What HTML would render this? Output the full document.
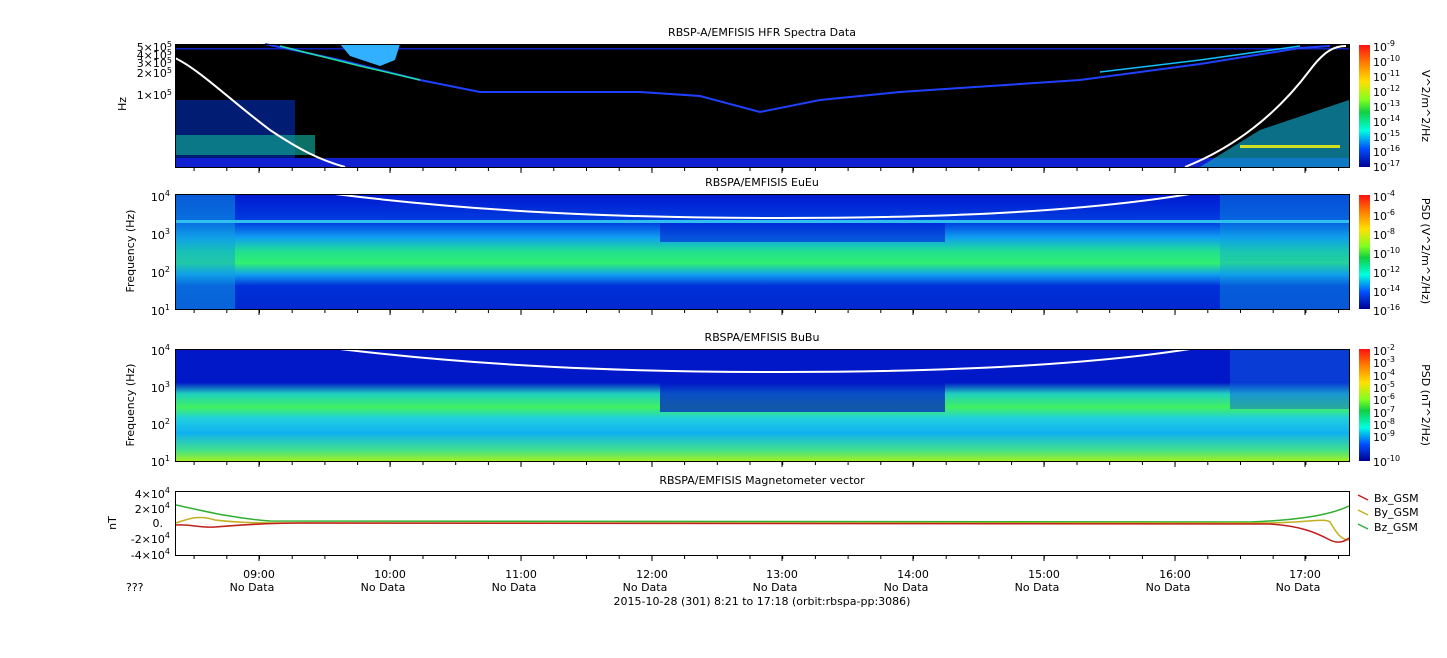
<!DOCTYPE html>
<html><head><meta charset="utf-8"><style>
html,body{margin:0;padding:0;background:#fff;width:1447px;height:658px;overflow:hidden}
svg{display:block;font-family:"DejaVu Sans","Liberation Sans",sans-serif}
text{fill:#000;font-size:11px}
</style></head><body>
<svg width="1447" height="658" viewBox="0 0 1447 658">
<defs>
<linearGradient id="jet" x1="0" y1="0" x2="0" y2="1">
<stop offset="0" stop-color="#ff1010"/><stop offset="0.15" stop-color="#ff8000"/><stop offset="0.3" stop-color="#ffe000"/><stop offset="0.45" stop-color="#80ff20"/><stop offset="0.55" stop-color="#10d040"/><stop offset="0.7" stop-color="#00ffe0"/><stop offset="0.85" stop-color="#0050ff"/><stop offset="1" stop-color="#000090"/>
</linearGradient>
<linearGradient id="p2" x1="0" y1="0" x2="0" y2="1">
<stop offset="0" stop-color="#0018d0"/><stop offset="0.25" stop-color="#0040e0"/><stop offset="0.38" stop-color="#10a0f0"/><stop offset="0.5" stop-color="#20e090"/><stop offset="0.6" stop-color="#30f070"/><stop offset="0.7" stop-color="#10a0f0"/><stop offset="0.8" stop-color="#0030d8"/><stop offset="1" stop-color="#0028d0"/>
</linearGradient>
<linearGradient id="p3" x1="0" y1="0" x2="0" y2="1">
<stop offset="0" stop-color="#0018c8"/><stop offset="0.3" stop-color="#0018c8"/><stop offset="0.4" stop-color="#20d0c0"/><stop offset="0.52" stop-color="#40f060"/><stop offset="0.62" stop-color="#20d0e0"/><stop offset="0.75" stop-color="#10b0f0"/><stop offset="0.9" stop-color="#40e090"/><stop offset="1" stop-color="#a0f020"/>
</linearGradient>
<pattern id="mt" x="193.6" y="0" width="32.7" height="700" patternUnits="userSpaceOnUse"><rect x="0" y="0" width="1" height="700" fill="#000"/></pattern>
</defs>

<!-- Panel 1 -->
<text x="762" y="36" text-anchor="middle">RBSP-A/EMFISIS  HFR Spectra Data</text>
<rect x="175" y="44" width="1174" height="123" fill="#000"/>
<rect x="175" y="48" width="1174" height="1.5" fill="#1020c0"/>
<path d="M265 44 L340 60 L420 80 L480 92 L640 92 L700 96 L760 112 L820 100 L900 92 L960 88 L1080 80 L1200 64 L1300 48 L1330 46" stroke="#2040ff" stroke-width="2" fill="none"/>
<path d="M280 46 L360 66 L420 80" stroke="#20e0a0" stroke-width="1.5" fill="none"/>
<path d="M1100 72 L1200 60 L1300 46" stroke="#10c0ff" stroke-width="1.5" fill="none"/>
<path d="M340 44 L400 44 L395 60 L380 66 L350 56Z" fill="#30b0ff"/>
<rect x="175" y="100" width="120" height="67" fill="#0030c0" opacity="0.6"/>
<rect x="175" y="135" width="140" height="20" fill="#10a090" opacity="0.7"/>
<rect x="175" y="158" width="1174" height="9" fill="#1020d0"/>
<path d="M1200 167 L1260 130 L1349 100 L1349 167Z" fill="#10a0c0" opacity="0.7"/>
<rect x="1240" y="145" width="100" height="3" fill="#d0e020"/>
<path d="M175 58 C200 70 230 100 270 130 C300 150 320 160 345 167" stroke="#fff" stroke-width="2" fill="none"/>
<path d="M1185 167 C1240 145 1280 110 1310 70 C1325 50 1335 46 1346 46" stroke="#fff" stroke-width="2" fill="none"/>
<rect x="175.5" y="44.5" width="1174" height="123" fill="none" stroke="#000"/>
<text x="120" y="110" transform="rotate(-90 120 104)" text-anchor="middle">Hz</text>
<g font-size="10" text-anchor="end"><text x="172" y="51">5×10<tspan dy="-4" font-size="8">5</tspan></text><text x="172" y="59">4×10<tspan dy="-4" font-size="8">5</tspan></text><text x="172" y="67">3×10<tspan dy="-4" font-size="8">5</tspan></text><text x="172" y="77">2×10<tspan dy="-4" font-size="8">5</tspan></text><text x="172" y="99">1×10<tspan dy="-4" font-size="8">5</tspan></text></g>
<rect x="1359" y="45" width="11" height="122" fill="url(#jet)"/>
<g font-size="11"><text x="1373" y="51">10<tspan dy="-5" font-size="8">-9</tspan></text><text x="1373" y="66">10<tspan dy="-5" font-size="8">-10</tspan></text><text x="1373" y="81">10<tspan dy="-5" font-size="8">-11</tspan></text><text x="1373" y="96">10<tspan dy="-5" font-size="8">-12</tspan></text><text x="1373" y="111">10<tspan dy="-5" font-size="8">-13</tspan></text><text x="1373" y="126">10<tspan dy="-5" font-size="8">-14</tspan></text><text x="1373" y="141">10<tspan dy="-5" font-size="8">-15</tspan></text><text x="1373" y="156">10<tspan dy="-5" font-size="8">-16</tspan></text><text x="1373" y="171">10<tspan dy="-5" font-size="8">-17</tspan></text></g>
<text x="1422" y="106" transform="rotate(90 1422 106)" text-anchor="middle">V^2/m^2/Hz</text>

<!-- Panel 2 -->
<text x="762" y="186" text-anchor="middle">RBSPA/EMFISIS  EuEu</text>
<rect x="175" y="194" width="1174" height="115" fill="url(#p2)"/>
<rect x="175" y="194" width="60" height="115" fill="#10a0e0" opacity="0.5"/>
<rect x="1220" y="194" width="129" height="115" fill="#10a0e0" opacity="0.4"/>
<rect x="660" y="222" width="285" height="20" fill="#0020d0" opacity="0.6"/>
<rect x="175" y="220" width="1174" height="3" fill="#30c0f0"/>
<path d="M335 194 C480 212 620 218 780 218 C940 218 1080 212 1190 194" stroke="#fff" stroke-width="2" fill="none"/>
<rect x="175.5" y="194.5" width="1174" height="115" fill="none" stroke="#000"/>
<text x="134" y="251" transform="rotate(-90 134 251)" text-anchor="middle">Frequency (Hz)</text>
<g text-anchor="end"><text x="170" y="201">10<tspan dy="-5" font-size="8">4</tspan></text><text x="170" y="239">10<tspan dy="-5" font-size="8">3</tspan></text><text x="170" y="277">10<tspan dy="-5" font-size="8">2</tspan></text><text x="170" y="315">10<tspan dy="-5" font-size="8">1</tspan></text></g>
<rect x="1359" y="195" width="11" height="114" fill="url(#jet)"/>
<g><text x="1373" y="201">10<tspan dy="-5" font-size="8">-4</tspan></text><text x="1373" y="220">10<tspan dy="-5" font-size="8">-6</tspan></text><text x="1373" y="239">10<tspan dy="-5" font-size="8">-8</tspan></text><text x="1373" y="258">10<tspan dy="-5" font-size="8">-10</tspan></text><text x="1373" y="277">10<tspan dy="-5" font-size="8">-12</tspan></text><text x="1373" y="296">10<tspan dy="-5" font-size="8">-14</tspan></text><text x="1373" y="315">10<tspan dy="-5" font-size="8">-16</tspan></text></g>
<text x="1422" y="251" transform="rotate(90 1422 251)" text-anchor="middle">PSD (V^2/m^2/Hz)</text>

<!-- Panel 3 -->
<text x="762" y="341" text-anchor="middle">RBSPA/EMFISIS  BuBu</text>
<rect x="175" y="349" width="1174" height="112" fill="url(#p3)"/>
<rect x="660" y="380" width="285" height="32" fill="#0018c8" opacity="0.7"/>
<rect x="1230" y="349" width="119" height="60" fill="#1060e0" opacity="0.5"/>
<path d="M340 349 C480 366 620 372 780 372 C940 372 1080 366 1190 349" stroke="#fff" stroke-width="2" fill="none"/>
<rect x="175.5" y="349.5" width="1174" height="112" fill="none" stroke="#000"/>
<text x="134" y="405" transform="rotate(-90 134 405)" text-anchor="middle">Frequency (Hz)</text>
<g text-anchor="end"><text x="170" y="355">10<tspan dy="-5" font-size="8">4</tspan></text><text x="170" y="392">10<tspan dy="-5" font-size="8">3</tspan></text><text x="170" y="429">10<tspan dy="-5" font-size="8">2</tspan></text><text x="170" y="466">10<tspan dy="-5" font-size="8">1</tspan></text></g>
<rect x="1359" y="349" width="11" height="112" fill="url(#jet)"/>
<g><text x="1373" y="355">10<tspan dy="-5" font-size="8">-2</tspan></text><text x="1373" y="367">10<tspan dy="-5" font-size="8">-3</tspan></text><text x="1373" y="380">10<tspan dy="-5" font-size="8">-4</tspan></text><text x="1373" y="392">10<tspan dy="-5" font-size="8">-5</tspan></text><text x="1373" y="404">10<tspan dy="-5" font-size="8">-6</tspan></text><text x="1373" y="417">10<tspan dy="-5" font-size="8">-7</tspan></text><text x="1373" y="429">10<tspan dy="-5" font-size="8">-8</tspan></text><text x="1373" y="441">10<tspan dy="-5" font-size="8">-9</tspan></text><text x="1373" y="466">10<tspan dy="-5" font-size="8">-10</tspan></text></g>
<text x="1422" y="405" transform="rotate(90 1422 405)" text-anchor="middle">PSD (nT^2/Hz)</text>

<!-- Panel 4 -->
<text x="762" y="484" text-anchor="middle">RBSPA/EMFISIS  Magnetometer vector</text>
<rect x="175.5" y="491.5" width="1174" height="64" fill="none" stroke="#000"/>
<path d="M176 505 C200 510 230 518 270 521 L1250 522 C1300 520 1330 515 1349 506" stroke="#30b030" stroke-width="1.5" fill="none"/>
<path d="M176 523 C190 518 200 515 215 520 C240 523 260 523 300 523 L1270 523 C1310 522 1325 518 1330 522 C1335 530 1340 540 1349 540" stroke="#c0b020" stroke-width="1.5" fill="none"/>
<path d="M176 525 C190 524 200 528 215 527 C240 525 270 523 300 523 L1270 524 C1300 526 1315 532 1330 540 C1338 544 1344 542 1349 538" stroke="#c02020" stroke-width="1.5" fill="none"/>
<text x="116" y="523" transform="rotate(-90 116 523)" text-anchor="middle">nT</text>
<g text-anchor="end"><text x="170" y="498">4×10<tspan dy="-5" font-size="8">4</tspan></text><text x="170" y="513">2×10<tspan dy="-5" font-size="8">4</tspan></text><text x="163" y="527">0.</text><text x="170" y="543">-2×10<tspan dy="-5" font-size="8">4</tspan></text><text x="170" y="559">-4×10<tspan dy="-5" font-size="8">4</tspan></text></g>
<g><path d="M1358 495 l10 5" stroke="#c02020" stroke-width="1.5"/><text x="1374" y="502">Bx_GSM</text>
<path d="M1358 510 l10 5" stroke="#c0b020" stroke-width="1.5"/><text x="1374" y="516">By_GSM</text>
<path d="M1358 524 l10 5" stroke="#30b030" stroke-width="1.5"/><text x="1374" y="531">Bz_GSM</text></g>

<!-- ticks -->
<rect x="190" y="168" width="1150" height="3" fill="url(#mt)"/>
<rect x="190" y="310" width="1150" height="3" fill="url(#mt)"/>
<rect x="190" y="462" width="1150" height="3" fill="url(#mt)"/>
<rect x="190" y="556" width="1150" height="3" fill="url(#mt)"/>
<g stroke="#000"><path d="M259 167v6M390 167v6M521 167v6M652 167v6M782 167v6M913 167v6M1044 167v6M1175 167v6M1305 167v6 M259 309v6M390 309v6M521 309v6M652 309v6M782 309v6M913 309v6M1044 309v6M1175 309v6M1305 309v6 M259 461v6M390 461v6M521 461v6M652 461v6M782 461v6M913 461v6M1044 461v6M1175 461v6M1305 461v6 M259 555v6M390 555v6M521 555v6M652 555v6M782 555v6M913 555v6M1044 555v6M1175 555v6M1305 555v6"/></g>
<g text-anchor="middle"><text x="259" y="578">09:00</text><text x="390" y="578">10:00</text><text x="521" y="578">11:00</text><text x="652" y="578">12:00</text><text x="782" y="578">13:00</text><text x="913" y="578">14:00</text><text x="1044" y="578">15:00</text><text x="1175" y="578">16:00</text><text x="1305" y="578">17:00</text>
<text x="252" y="591">No Data</text><text x="383" y="591">No Data</text><text x="514" y="591">No Data</text><text x="645" y="591">No Data</text><text x="775" y="591">No Data</text><text x="906" y="591">No Data</text><text x="1037" y="591">No Data</text><text x="1168" y="591">No Data</text><text x="1298" y="591">No Data</text>
<text x="762" y="605">2015-10-28 (301) 8:21 to 17:18 (orbit:rbspa-pp:3086)</text></g>
<text x="126" y="591">???</text>
</svg>
</body></html>
